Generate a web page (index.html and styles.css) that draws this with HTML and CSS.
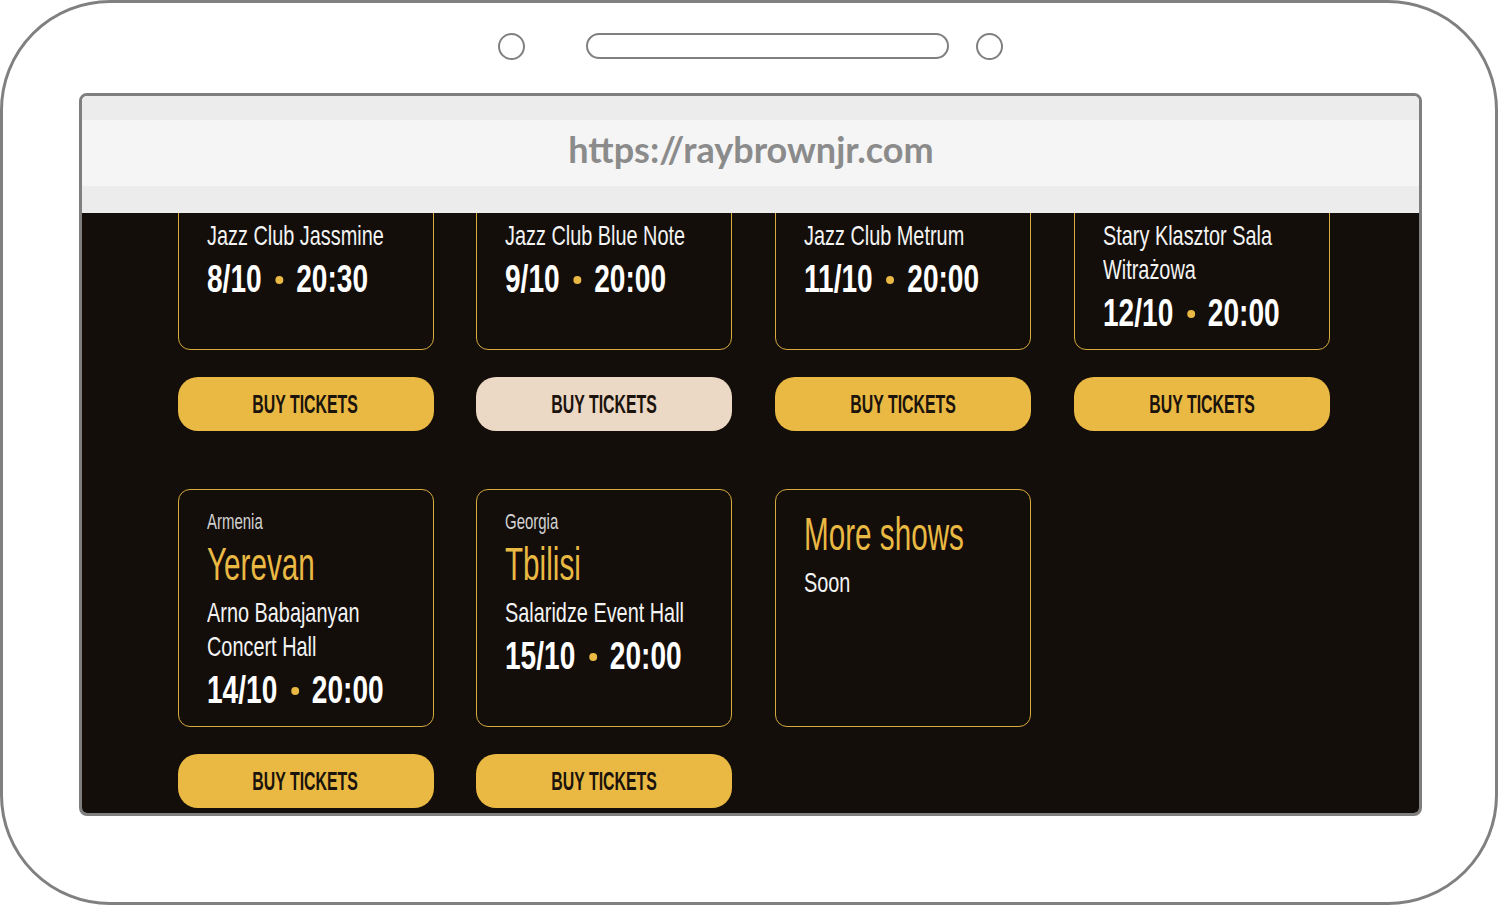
FILE: index.html
```html
<!DOCTYPE html>
<html lang="en">
<head>
<meta charset="utf-8">
<title>Ray Brown Jr. — Tour</title>
<link rel="stylesheet" href="styles.css">
</head>
<body>
<div class="device">
  <div class="hardware">
    <span class="cam"></span>
    <span class="speaker"></span>
    <span class="cam cam-right"></span>
  </div>
  <div class="screen">
    <div class="toolbar">
      <div class="urlbar">https://raybrownjr.com</div>
    </div>
    <div class="content">
      <div class="grid">
        <div class="show">
          <div class="card">
            <div class="venue">Jazz Club Jassmine</div>
            <div class="date">8/10<span class="dot"></span>20:30</div>
          </div>
          <a class="btn"><span class="btn-label">BUY TICKETS</span></a>
        </div>
        <div class="show">
          <div class="card">
            <div class="venue">Jazz Club Blue Note</div>
            <div class="date">9/10<span class="dot"></span>20:00</div>
          </div>
          <a class="btn btn-hover"><span class="btn-label">BUY TICKETS</span></a>
        </div>
        <div class="show">
          <div class="card">
            <div class="venue">Jazz Club Metrum</div>
            <div class="date">11/10<span class="dot"></span>20:00</div>
          </div>
          <a class="btn"><span class="btn-label">BUY TICKETS</span></a>
        </div>
        <div class="show">
          <div class="card">
            <div class="venue">Stary Klasztor Sala<br>Witrażowa</div>
            <div class="date">12/10<span class="dot"></span>20:00</div>
          </div>
          <a class="btn"><span class="btn-label">BUY TICKETS</span></a>
        </div>

        <div class="show">
          <div class="card">
            <div class="country">Armenia</div>
            <div class="city">Yerevan</div>
            <div class="venue">Arno Babajanyan<br>Concert Hall</div>
            <div class="date">14/10<span class="dot"></span>20:00</div>
          </div>
          <a class="btn"><span class="btn-label">BUY TICKETS</span></a>
        </div>
        <div class="show">
          <div class="card">
            <div class="country">Georgia</div>
            <div class="city">Tbilisi</div>
            <div class="venue">Salaridze Event Hall</div>
            <div class="date">15/10<span class="dot"></span>20:00</div>
          </div>
          <a class="btn"><span class="btn-label">BUY TICKETS</span></a>
        </div>
        <div class="show show-no-tickets">
          <div class="card">
            <div class="city">More shows</div>
            <div class="venue">Soon</div>
          </div>
        </div>
      </div>
    </div>
  </div>
</div>
</body>
</html>
```
FILE: styles.css
```css
html, body {
  margin: 0;
  padding: 0;
  background: #ffffff;
}

body {
  font-family: "Liberation Sans", Arial, sans-serif;
}

.device {
  box-sizing: border-box;
  width: 1498px;
  height: 905px;
  border: 3px solid #808080;
  border-radius: 110px;
  display: flex;
  flex-direction: column;
  overflow: hidden;
}

.hardware {
  height: 90px;
  box-sizing: border-box;
  padding: 30px 0 0 495px;
  display: flex;
  align-items: flex-start;
}

.cam {
  box-sizing: border-box;
  width: 27px;
  height: 27px;
  border: 2.5px solid #808080;
  border-radius: 50%;
}

.speaker {
  box-sizing: border-box;
  width: 363px;
  height: 26px;
  margin-left: 61px;
  border: 2.5px solid #808080;
  border-radius: 13px;
}

.cam-right {
  margin-left: 27px;
}

.screen {
  box-sizing: border-box;
  margin-left: 75.5px;
  width: 1343px;
  height: 723px;
  border: 3px solid #7f7f7f;
  border-radius: 8px;
  overflow: hidden;
  display: flex;
  flex-direction: column;
}

.toolbar {
  background: #ececec;
  padding: 24px 0 27px;
}

.urlbar {
  height: 66px;
  box-sizing: border-box;
  padding: 0 0 8px 2px;
  background: #f5f5f5;
  display: flex;
  align-items: center;
  justify-content: center;
  font-family: Lato, "Liberation Sans", sans-serif;
  font-weight: 700;
  font-size: 36px;
  color: #8b8b8b;
}

.content {
  flex: 1;
  background: #140e0a;
  overflow: hidden;
}

.grid {
  margin: -15px 0 0 96px;
  display: grid;
  grid-template-columns: repeat(4, 256px);
  column-gap: 42.8px;
  row-gap: 58px;
}

.show {
  display: flex;
  flex-direction: column;
  gap: 27px;
}

.show-no-tickets {
  padding-bottom: 81px;
}

.card {
  flex: 1;
  border: 1.5px solid #d6aa3e;
  border-radius: 12px;
  padding: 19.5px 28px 14px;
}

.country,
.city,
.venue,
.date {
  white-space: nowrap;
  transform-origin: left center;
}

.country {
  font-size: 22px;
  line-height: 26px;
  color: #d2d2d2;
  transform: scaleX(0.68);
  margin-bottom: 4px;
}

.city {
  font-size: 46px;
  line-height: 50px;
  color: #e9b943;
  transform: scaleX(0.645);
  margin-bottom: 7px;
}

.venue {
  font-size: 28px;
  line-height: 34px;
  color: #f3f3f3;
  transform: scaleX(0.71);
}

.date {
  width: max-content;
  margin-top: 4px;
  font-size: 39px;
  line-height: 44px;
  font-weight: 700;
  color: #ffffff;
  transform: scaleX(0.72);
  display: flex;
  align-items: center;
}

.dot {
  flex: 0 0 auto;
  display: block;
  width: 11px;
  height: 8px;
  margin: 2px 18px 0 19px;
  border-radius: 50%;
  background: #e9b943;
}

.btn {
  height: 54px;
  border-radius: 20px;
  background: #e9b943;
  display: flex;
  align-items: center;
  justify-content: center;
  cursor: pointer;
}

.btn-hover {
  background: #ebd8c5;
}

.btn-label {
  display: inline-block;
  font-size: 25.6px;
  line-height: 30px;
  font-weight: 700;
  color: #1b130c;
  white-space: nowrap;
  transform: scaleX(0.62);
}
```
